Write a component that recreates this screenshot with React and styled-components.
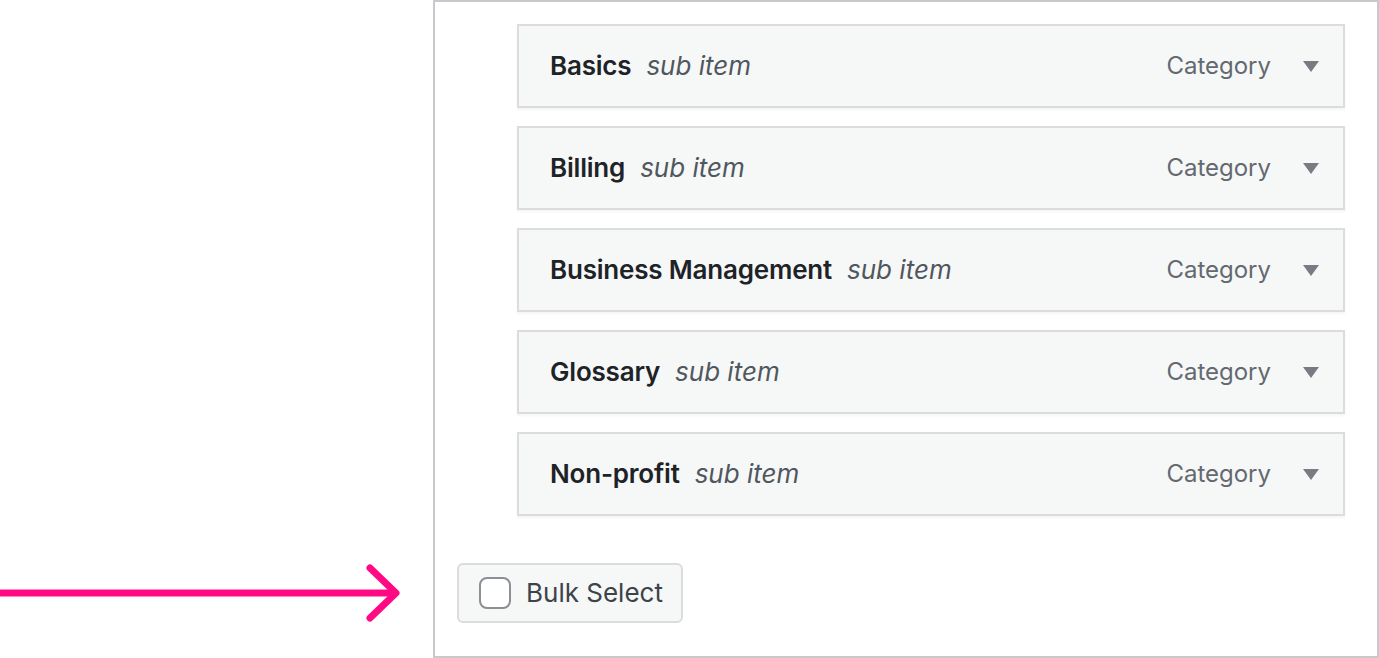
import React from "react";
import styled, { createGlobalStyle } from "styled-components";

const Global = createGlobalStyle`
  html, body { margin: 0; padding: 0; background: #fff; }
  body { font-family: Inter, "Noto Sans", "Liberation Sans", sans-serif; }
`;

const Page = styled.div`
  display: flex;
  width: 1379px;
  height: 658px;
  overflow: hidden;
`;

const ArrowCol = styled.div`
  width: 433px;
  flex: none;
  display: flex;
  flex-direction: column;
  justify-content: flex-end;
  padding-bottom: 35px;
  box-sizing: border-box;
`;

const Panel = styled.div`
  width: 946px;
  height: 658px;
  box-sizing: border-box;
  border: 2px solid #c8c9cc;
  padding: 22px 32px 0 22px;
  display: flex;
  flex-direction: column;
`;

const List = styled.div`
  display: flex;
  flex-direction: column;
  gap: 18px;
  margin-left: 60px;
`;

const Item = styled.div`
  height: 84px;
  box-sizing: border-box;
  border: 2px solid #dcdcde;
  background: #f6f7f7;
  box-shadow: 0 2px 2px rgba(0, 0, 0, 0.04);
  display: flex;
  align-items: center;
  padding: 0 24px 0 31px;
  line-height: 1.2;
`;

const Title = styled.span`
  font-size: 26px;
  font-weight: 600;
  color: #1d2327;
  letter-spacing: -0.2px;
`;

const Sub = styled.span`
  font-size: 26px;
  font-style: italic;
  color: #50575e;
  margin-left: 15px;
  flex: 1;
`;

const Type = styled.span`
  font-size: 24px;
  color: #646970;
  margin-right: 32px;
`;

const Caret = styled.span`
  width: 0;
  height: 0;
  margin-top: 1px;
  border-left: 8px solid transparent;
  border-right: 8px solid transparent;
  border-top: 11px solid #787c82;
`;

const BulkButton = styled.label`
  margin-top: 47px;
  align-self: flex-start;
  width: 226px;
  height: 60px;
  box-sizing: border-box;
  border: 2px solid #dcdcde;
  border-radius: 6px;
  background: #f6f7f7;
  display: flex;
  align-items: center;
  padding-left: 20px;
  gap: 15px;
  font-size: 26px;
  line-height: 1.2;
  color: #3c434a;
`;

const Box = styled.span`
  width: 32px;
  height: 32px;
  box-sizing: border-box;
  border: 2px solid #8c8f94;
  border-radius: 8px;
  background: #fff;
`;

const items = ["Basics", "Billing", "Business Management", "Glossary", "Non-profit"];

export default function App() {
  return (
    <>
      <Global />
      <Page>
        <ArrowCol>
          <svg width="433" height="60" viewBox="0 0 433 60">
            <line x1="0" y1="30" x2="394" y2="30" stroke="#ff0a84" strokeWidth="7" />
            <polyline
              points="370,5 396,30 370,55"
              fill="none"
              stroke="#ff0a84"
              strokeWidth="7"
              strokeLinecap="round"
              strokeLinejoin="round"
            />
          </svg>
        </ArrowCol>
        <Panel>
          <List>
            {items.map((t) => (
              <Item key={t}>
                <Title>{t}</Title>
                <Sub>sub item</Sub>
                <Type>Category</Type>
                <Caret />
              </Item>
            ))}
          </List>
          <BulkButton>
            <Box />
            Bulk Select
          </BulkButton>
        </Panel>
      </Page>
    </>
  );
}
